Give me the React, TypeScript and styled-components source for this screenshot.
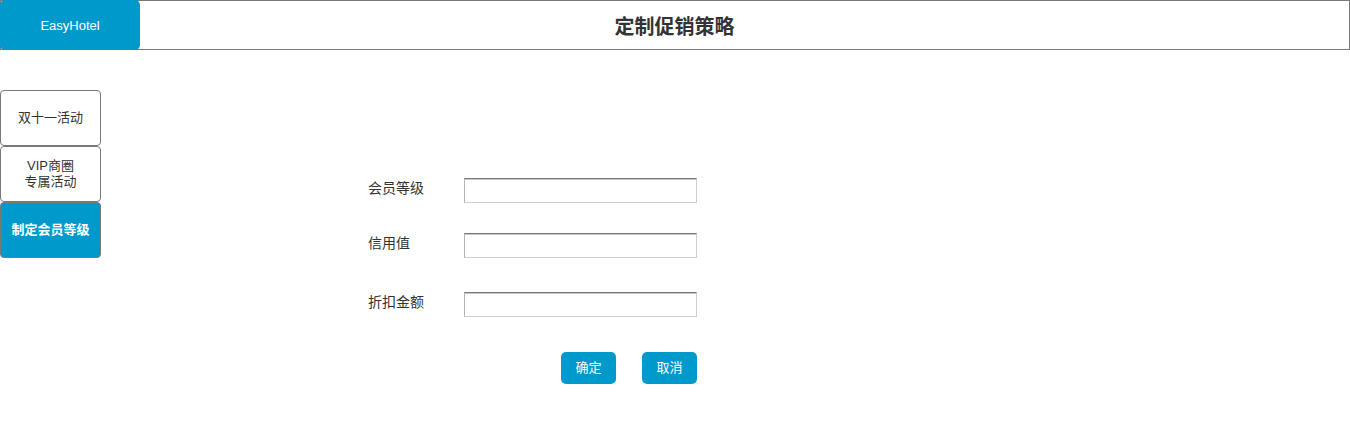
import React from "react";
import styled, { createGlobalStyle } from "styled-components";

const Global = createGlobalStyle`
  html, body { margin: 0; padding: 0; background: #fff; }
  body { font-family: Arial, "Liberation Sans", "Noto Sans CJK SC", sans-serif; color: #333; }
  * { box-sizing: border-box; }
`;

const Header = styled.header`
  display: flex;
  align-items: stretch;
  height: 50px;
  width: 1350px;
  border: 1px solid #797979;
`;

const Brand = styled.div`
  width: 140px;
  margin: -1px 0 -1px -1px;
  background: #0099cc;
  border-radius: 5px;
  color: #fff;
  font-size: 13px;
  display: flex;
  align-items: center;
  justify-content: center;
`;

const Title = styled.h1`
  flex: 1;
  margin: 0;
  padding-right: 140px;
  display: flex;
  align-items: center;
  justify-content: center;
  font-size: 20px;
  font-weight: bold;
  color: #333;
`;

const Body = styled.div`
  display: flex;
  align-items: flex-start;
`;

const Sidebar = styled.nav`
  margin-top: 40px;
  width: 101px;
  display: flex;
  flex-direction: column;
`;

const NavItem = styled.div<{ $active?: boolean }>`
  height: 56px;
  border: 1px solid #797979;
  border-radius: 4px;
  background: ${(p) => (p.$active ? "#0099cc" : "#fff")};
  color: ${(p) => (p.$active ? "#fff" : "#333")};
  font-weight: ${(p) => (p.$active ? "bold" : "normal")};
  font-size: 13px;
  line-height: 16px;
  display: flex;
  align-items: center;
  justify-content: center;
  text-align: center;
`;

const Form = styled.div`
  margin-left: 267px;
  margin-top: 128px;
  display: flex;
  flex-direction: column;
  width: 329px;
`;

const Row = styled.div<{ $gap: number }>`
  display: flex;
  align-items: center;
  margin-top: ${(p) => p.$gap}px;
`;

const Label = styled.label`
  width: 96px;
  flex-shrink: 0;
  font-size: 14px;
  color: #333;
  margin-top: -8px;
  white-space: nowrap;
`;

const Input = styled.input`
  width: 233px;
  height: 25px;
  border: 1px solid #cfcfcf;
  border-left-color: #b5b5b5;
  border-top: 1px solid #777;
  box-shadow: inset 0 1px 0 #c8c8c8;
  padding: 0 4px;
  outline: none;
  font-size: 13px;
  flex-shrink: 0;
`;

const Actions = styled.div`
  display: flex;
  justify-content: flex-end;
  gap: 26px;
  margin-top: 35px;
  margin-left: 96px;
  width: 233px;
`;

const Button = styled.button`
  width: 55px;
  height: 32px;
  border: none;
  border-radius: 5px;
  padding: 0 0 3px;
  background: #0099cc;
  color: #fff;
  font-size: 13px;
  font-family: inherit;
  cursor: pointer;
`;

export default function App() {
  return (
    <>
      <Global />
      <Header>
        <Brand>EasyHotel</Brand>
        <Title>定制促销策略</Title>
      </Header>
      <Body>
        <Sidebar>
          <NavItem>双十一活动</NavItem>
          <NavItem>
            VIP商圈
            <br />
            专属活动
          </NavItem>
          <NavItem $active>制定会员等级</NavItem>
        </Sidebar>
        <Form>
          <Row $gap={0}>
            <Label>会员等级</Label>
            <Input />
          </Row>
          <Row $gap={30}>
            <Label>信用值</Label>
            <Input />
          </Row>
          <Row $gap={34}>
            <Label>折扣金额</Label>
            <Input />
          </Row>
          <Actions>
            <Button type="button">确定</Button>
            <Button type="button">取消</Button>
          </Actions>
        </Form>
      </Body>
    </>
  );
}
